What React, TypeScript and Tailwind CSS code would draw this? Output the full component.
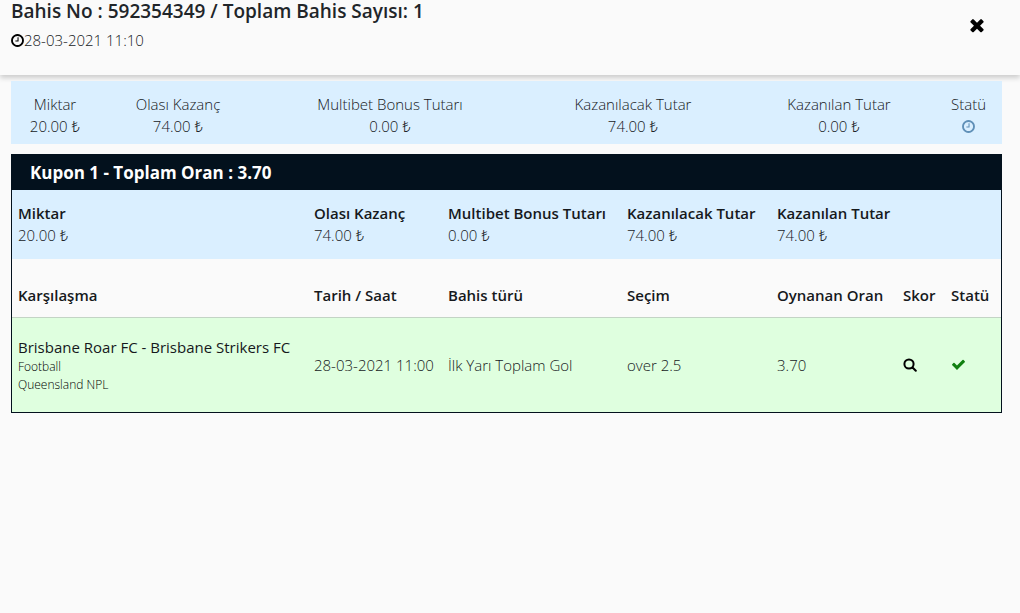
import type { ReactNode } from "react";

const ICONS = {
  clock:
    "M1024 544v448q0 14-9 23t-23 9h-320q-14 0-23-9t-9-23v-64q0-14 9-23t23-9h224v-352q0-14 9-23t23-9h64q14 0 23 9t9 23zm416 352q0-148-73-273t-198-198-273-73-273 73-198 198-73 273 73 273 198 198 273 73 273-73 198-198 73-273zm224 0q0 209-103 385.5t-279.5 279.5-385.5 103-385.5-103-279.5-279.5-103-385.5 103-385.5 279.5-279.5 385.5-103 385.5 103 279.5 279.5 103 385.5z",
  times:
    "M1490 1322q0 40-28 68l-136 136q-28 28-68 28t-68-28l-294-294-294 294q-28 28-68 28t-68-28l-136-136q-28-28-28-68t28-68l294-294-294-294q-28-28-28-68t28-68l136-136q28-28 68-28t68 28l294 294 294-294q28-28 68-28t68 28l136 136q28 28 28 68t-28 68l-294 294 294 294q28 28 28 68z",
  check:
    "M1671 566q0 40-28 68l-724 724-136 136q-28 28-68 28t-68-28l-136-136-362-362q-28-28-28-68t28-68l136-136q28-28 68-28t68 28l294 295 656-657q28-28 68-28t68 28l136 136q28 28 28 68z",
};

function Icon({ name, className }: { name: keyof typeof ICONS; className: string }) {
  return (
    <svg viewBox="0 0 1792 1792" fill="currentColor" aria-hidden="true" className={className}>
      <path d={ICONS[name]} />
    </svg>
  );
}

function SearchIcon({ className }: { className: string }) {
  return (
    <svg
      viewBox="0 0 14 14"
      fill="none"
      stroke="currentColor"
      strokeWidth="2"
      strokeLinecap="round"
      aria-hidden="true"
      className={className}
    >
      <circle cx="6" cy="6" r="4.6" />
      <path d="M9.5 9.5l3.3 3.3" />
    </svg>
  );
}

const summary: { label: string; value: ReactNode }[] = [
  { label: "Miktar", value: "20.00 ₺" },
  { label: "Olası Kazanç", value: "74.00 ₺" },
  { label: "Multibet Bonus Tutarı", value: "0.00 ₺" },
  { label: "Kazanılacak Tutar", value: "74.00 ₺" },
  { label: "Kazanılan Tutar", value: "0.00 ₺" },
  { label: "Statü", value: <Icon name="clock" className="size-[15px] text-[#6090b8]" /> },
];

const totals = [
  ["Miktar", "20.00 ₺"],
  ["Olası Kazanç", "74.00 ₺"],
  ["Multibet Bonus Tutarı", "0.00 ₺"],
  ["Kazanılacak Tutar", "74.00 ₺"],
  ["Kazanılan Tutar", "74.00 ₺"],
];

const columns = ["Karşılaşma", "Tarih / Saat", "Bahis türü", "Seçim", "Oynanan Oran", "Skor", "Statü"];

export default function App() {
  return (
    <div className="min-h-screen bg-[#fafafa] font-['Open_Sans','Noto_Sans',sans-serif] text-[15px] leading-[22px] font-light text-[#16191c]">
      <header className="mb-[6px] flex h-[75px] items-start justify-between pl-[11px] shadow-[0_3px_5px_rgba(0,0,0,0.18)]">
        <div>
          <h1 className="text-[19px] leading-[22px] font-semibold text-[#212529]">
            Bahis No : 592354349 / Toplam Bahis Sayısı: 1
          </h1>
          <p className="mt-[7px] flex items-center">
            <Icon name="clock" className="-mx-px size-[15px] text-black" />
            28-03-2021 11:10
          </p>
        </div>
        <button type="button" aria-label="Kapat" className="mt-[15px] mr-[33px] cursor-pointer text-black">
          <Icon name="times" className="size-5" />
        </button>
      </header>

      <main className="pr-[18px] pl-[11px]">
        <dl className="grid grid-cols-[88fr_158fr_266fr_220fr_192fr_67fr] bg-[#daefff] pt-3 pb-[7px] text-center">
          {summary.map(({ label, value }) => (
            <div key={label}>
              <dt>{label}</dt>
              <dd className="flex h-[22px] items-center justify-center">{value}</dd>
            </div>
          ))}
        </dl>

        <section className="mt-[10px] border border-[#03111d]">
          <h2 className="bg-[#03111d] px-[18px] pt-[6px] pb-[5px] text-[17px] leading-6 font-bold text-white">
            Kupon 1 - Toplam Oran : 3.70
          </h2>
          <table className="w-full table-fixed text-left">
            <colgroup>
              <col />
              <col className="w-[134px]" />
              <col className="w-[179px]" />
              <col className="w-[150px]" />
              <col className="w-[126px]" />
              <col className="w-[48px]" />
              <col className="w-[56px]" />
            </colgroup>
            <tbody>
              <tr className="h-[69px] bg-[#daefff]">
                {totals.map(([label, value]) => (
                  <td key={label} className="px-[6px] pb-[2px] whitespace-nowrap">
                    <strong className="block font-semibold">{label}</strong>
                    {value}
                  </td>
                ))}
                <td colSpan={2} />
              </tr>
              <tr className="h-[58px] border-b border-[#c3d4c5]">
                {columns.map((column) => (
                  <th key={column} scope="col" className="px-[6px] pt-[14px] font-semibold whitespace-nowrap">
                    {column}
                  </th>
                ))}
              </tr>
              <tr className="h-[95px] bg-[#dfffdf]">
                <td className="px-[6px]">
                  <div className="font-normal">Brisbane Roar FC - Brisbane Strikers FC</div>
                  <div className="text-xs leading-[18px] text-black">
                    Football
                    <br />
                    Queensland NPL
                  </div>
                </td>
                <td className="px-[6px] whitespace-nowrap">28-03-2021 11:00</td>
                <td className="px-[6px]">İlk Yarı Toplam Gol</td>
                <td className="px-[6px]">over 2.5</td>
                <td className="px-[6px]">3.70</td>
                <td className="px-[6px]">
                  <button type="button" aria-label="Skor" className="block cursor-pointer text-black">
                    <SearchIcon className="size-[14px]" />
                  </button>
                </td>
                <td className="px-[6px]">
                  <Icon name="check" className="size-[15px] text-[#108010]" />
                </td>
              </tr>
            </tbody>
          </table>
        </section>
      </main>
    </div>
  );
}
